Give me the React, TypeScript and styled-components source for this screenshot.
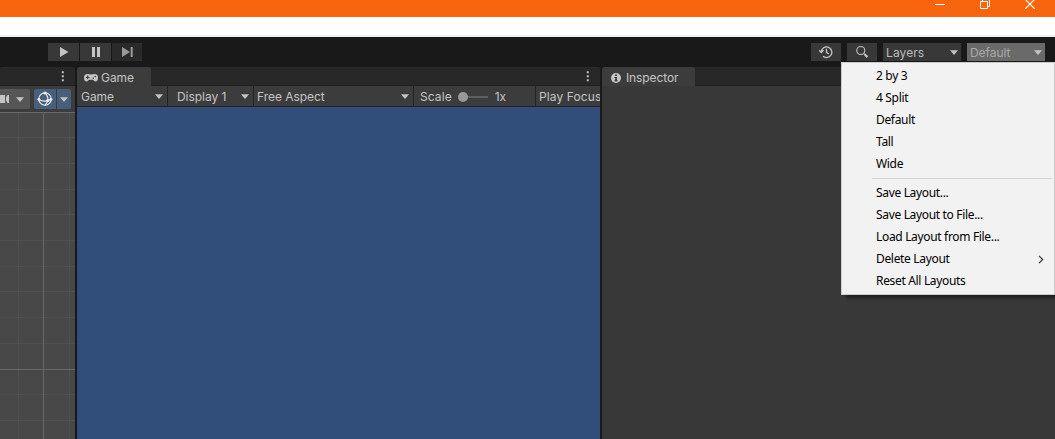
import React from "react";
import styled, { createGlobalStyle } from "styled-components";

const Global = createGlobalStyle`
  * { box-sizing: border-box; }
  body { margin: 0; overflow: hidden; background: #191919; }
  svg { display: block; flex: none; }
`;

const Editor = styled.div`
  position: relative;
  display: flex;
  flex-direction: column;
  width: 1055px;
  height: 439px;
  overflow: hidden;
  background: #191919;
  color: #c4c4c4;
  font: 12px/16px Inter, "Liberation Sans", sans-serif;
  white-space: nowrap;
`;
const TitleBar = styled.div`
  display: flex;
  justify-content: flex-end;
  gap: 35px;
  height: 17px;
  flex: none;
  padding-right: 20px;
  background: #f9650f;
`;
const MenuStrip = styled.div`
  height: 20px;
  flex: none;
  background: #fff;
  border-bottom: 2px solid #eeefef;
`;
const Toolbar = styled.div`
  display: flex;
  justify-content: space-between;
  height: 30px;
  flex: none;
  padding: 6px 10px 0 48px;
`;
const Group = styled.div<{ $gap: number }>`
  display: flex;
  gap: ${(p) => p.$gap}px;
  height: 18px;
`;
const ToolButton = styled.div<{ $width: number; $dim?: boolean }>`
  display: flex;
  align-items: center;
  justify-content: center;
  width: ${(p) => p.$width}px;
  background: ${(p) => (p.$dim ? "#2a2a2a" : "#383838")};
`;
const Dropdown = styled.div<{ $active?: boolean }>`
  display: flex;
  align-items: center;
  justify-content: space-between;
  width: 78px;
  padding: 1px 3px 0;
  background: ${(p) => (p.$active ? "#6a6a6a" : "#383838")};
  color: ${(p) => (p.$active ? "#a9a9a9" : "#bcbcbc")};
`;
const Label = styled.span<{ $track?: number }>`
  letter-spacing: ${(p) => p.$track ?? -0.05}px;
`;
const Docks = styled.div`
  display: flex;
  gap: 2px;
  flex: 1;
  min-height: 0;
`;
const Dock = styled.div<{ $width?: number }>`
  display: flex;
  flex-direction: column;
  overflow: hidden;
  border-radius: 3px 3px 0 0;
  background: #383838;
  ${(p) => (p.$width ? `width: ${p.$width}px; flex: none;` : "flex: 1;")}
`;
const TabRow = styled.div`
  display: flex;
  justify-content: space-between;
  height: 19px;
  flex: none;
  background: #282828;
  box-shadow: inset 0 -1px #202020;
`;
const Tab = styled.div<{ $width: number }>`
  display: flex;
  align-items: center;
  width: ${(p) => p.$width}px;
  padding: 2px 0 0 7px;
  gap: 3px;
  border-radius: 3px 3px 0 0;
  background: #3c3c3c;
`;
const InfoTab = styled(Tab)`
  padding-left: 9px;
  gap: 5px;
`;
const More = styled.div<{ $right: number }>`
  display: flex;
  margin-left: auto;
  padding: 4px ${(p) => p.$right}px 0 0;
`;
const SceneBar = styled.div`
  display: flex;
  align-items: center;
  height: 26px;
  flex: none;
  background: #3c3c3c;
`;
const SceneButton = styled.div<{ $width: number; $on?: boolean; $side?: "left" | "right" }>`
  display: flex;
  align-items: center;
  justify-content: ${(p) => (p.$on ? "center" : "space-between")};
  width: ${(p) => p.$width}px;
  height: 20px;
  background: ${(p) => (p.$on ? "#46607c" : "#565656")};
  border-radius: ${(p) => (p.$side === "left" ? "2px 0 0 2px" : "0 2px 2px 0")};
  margin-left: ${(p) => (p.$on ? (p.$side === "left" ? 4 : 1) : 0)}px;
  padding-right: ${(p) => (p.$on ? 0 : 6)}px;
`;
const GameBar = styled.div`
  display: flex;
  height: 21px;
  flex: none;
  background: #3c3c3c;
  border-bottom: 1px solid #232323;
`;
const GameField = styled.div<{ $width: number; $left: number; $right?: number }>`
  display: flex;
  align-items: center;
  justify-content: space-between;
  width: ${(p) => p.$width}px;
  flex: none;
  padding: 1px ${(p) => p.$right ?? 4}px 0 ${(p) => p.$left}px;
  border-right: 1px solid #232323;
`;
const LastField = styled.div`
  display: flex;
  align-items: center;
  padding: 1px 0 0 3px;
`;
const Viewport = styled.div`
  flex: 1;
  background: #314d79;
`;
const InspectorBody = styled.div`
  flex: 1;
  background: #383838;
`;
const Menu = styled.div`
  position: absolute;
  left: 841px;
  top: 62px;
  width: 214px;
  height: 233px;
  padding: 2px;
  border: 1px solid #ccc;
  background: #f2f2f2;
  box-shadow: 4px 4px 3px -1px rgba(0, 0, 0, 0.45);
  color: #000;
  font: 12px/22px "Noto Sans", "Open Sans", sans-serif;
`;
const MenuItem = styled.div`
  display: flex;
  align-items: center;
  justify-content: space-between;
  height: 22px;
  padding: 0 8px 0 32px;
  letter-spacing: -0.33px;
`;
const Divider = styled.div`
  height: 1px;
  margin: 3px 0 3px 28px;
  background: #d4d4d4;
`;

const Caret = ({ color = "#c4c4c4" }: { color?: string }) => (
  <svg width="8" height="5" viewBox="0 0 8 5"><path d="M0 .2h8L4 5z" fill={color} /></svg>
);
const Dots = () => (
  <svg width="3" height="11" viewBox="0 0 3 11" fill="#c4c4c4">
    <path d="M.8 0.3h2v2h-2zM.8 4.3h2v2h-2zM.8 8.3h2v2h-2z" />
  </svg>
);

const layouts = ["2 by 3", "4 Split", "Default", "Tall", "Wide"];
const actions = ["Save Layout...", "Save Layout to File...", "Load Layout from File...", "Delete Layout", "Reset All Layouts"];

const horizontals = [25, 51, 77, 102, 128, 154, 179, 205, 231, 282, 308];

export default function App() {
  return (
    <Editor>
      <Global />
      <TitleBar>
        <svg width="10" height="17"><path d="M0 4.5h10" stroke="#fff" /></svg>
        <svg width="10" height="17" fill="none" stroke="#fff">
          <path d="M.5 1.5h7v7h-7zM2.5 1V-.5h7v7H8" />
        </svg>
        <svg width="10" height="17" fill="none" stroke="#fff" strokeWidth="1.1">
          <path d="M.3-.7l9.4 9.5M9.7-.7L.3 8.8" />
        </svg>
      </TitleBar>
      <MenuStrip />
      <Toolbar>
        <Group $gap={1}>
          <ToolButton $width={31}>
            <svg width="10" height="10"><path d="M1 0v10l8.5-5z" fill="#c4c4c4" /></svg>
          </ToolButton>
          <ToolButton $width={31}>
            <svg width="8" height="10"><path d="M0 0h3v10H0zM5 0h3v10H5z" fill="#c4c4c4" /></svg>
          </ToolButton>
          <ToolButton $width={30} $dim>
            <svg width="11" height="10"><path d="M0 0v10l8-5zM8.7 0h2v10h-2z" fill="#9b9b9b" /></svg>
          </ToolButton>
        </Group>
        <Group $gap={6}>
          <ToolButton $width={30}>
            <svg width="14" height="14" viewBox="0 0 14 14" fill="none" stroke="#c4c4c4" strokeWidth="1.3">
              <path d="M2.2 7A5.3 5.3 0 1 1 4 11.2M.2 5.3L2.2 7.5 4.5 5.3M7.5 3.8v3.5l2.3 1.7" />
            </svg>
          </ToolButton>
          <ToolButton $width={30}>
            <svg width="14" height="14" viewBox="0 0 14 14" fill="none" stroke="#c4c4c4" strokeWidth="1.1">
              <circle cx="5.8" cy="5.5" r="4" /><path d="M8.7 8.4l1 1" /><path d="M9.6 9.3l2.8 2.8" strokeWidth="2.2" />
            </svg>
          </ToolButton>
          <Dropdown><Label $track={0.1}>Layers</Label><Caret /></Dropdown>
          <Dropdown $active><Label>Default</Label><Caret /></Dropdown>
        </Group>
      </Toolbar>
      <Docks>
        <Dock $width={75}>
          <TabRow><More $right={11}><Dots /></More></TabRow>
          <SceneBar>
            <SceneButton $width={30}>
              <svg width="10" height="8"><path d="M0 0h5v8H0zM6 2.5L7.5 0H9v8H7.5L6 5.5z" fill="#c4c4c4" /></svg>
              <Caret />
            </SceneButton>
            <SceneButton $width={22} $on $side="left">
              <svg width="16" height="16" viewBox="0 0 16 16" fill="none" stroke="#eee" strokeWidth="1.1">
                <circle cx="8" cy="8" r="6.2" />
                <path d="M8 2c2.6 2.3 3.2 5 2.8 7.5M2 8.5c2.5 1.6 6 2 8.8 1 1.4-.3 2.4-.7 3.2-1.3M8 14c1.3-1.2 2.3-2.7 2.8-4.5" />
                <g fill="#eee" stroke="none">
                  <circle cx="8" cy="2" r="1.5" /><circle cx="1.8" cy="8.3" r="1.4" />
                  <circle cx="14" cy="8.3" r="1.4" /><circle cx="10.8" cy="9.5" r="1.6" />
                </g>
              </svg>
            </SceneButton>
            <SceneButton $width={14} $on $side="right"><Caret color="#c4c4c4" /></SceneButton>
          </SceneBar>
          <svg width="75" height="327" fill="none">
            <path d="M0 0h75v327H0z" fill="#484848" />
            <path d={horizontals.map((y) => `M0 ${y + 0.5}h75`).join("") + "M18.5 0v327M69.5 0v327"} stroke="#505050" />
            <path d="M0 .5h75M0 257.5h75M43.5 0v327" stroke="#686868" />
          </svg>
        </Dock>
        <Dock $width={523}>
          <TabRow>
            <Tab $width={74}>
              <svg width="14" height="8" viewBox="0 0 14 8">
                <path d="M3.7 0Q7 .9 10.3 0A3.5 3.5 0 0 1 14 4c0 2-1 3.6-2.4 3.6C10.2 7.6 9.6 5.7 8.6 5.7H5.4c-1 0-1.6 1.9-3 1.9C1 7.6 0 6 0 4A3.5 3.5 0 0 1 3.7 0z" fill="#c4c4c4" />
                <path d="M3.7 1.6v3.6M1.9 3.4h3.6" stroke="#333" />
                <circle cx="9.2" cy="4.2" r=".8" fill="#333" /><circle cx="11.3" cy="2.5" r=".8" fill="#333" />
              </svg>
              <Label>Game</Label>
            </Tab>
            <More $right={11}><Dots /></More>
          </TabRow>
          <GameBar>
            <GameField $width={91} $left={4}><Label>Game</Label><Caret /></GameField>
            <GameField $width={86} $left={9}><Label>Display 1</Label><Caret /></GameField>
            <GameField $width={160} $left={3}><Label>Free Aspect</Label><Caret /></GameField>
            <GameField $width={122} $left={6} $right={29}>
              <Label $track={0.1}>Scale</Label>
              <svg width="30" height="10"><path d="M6 5h24" stroke="#5e5e5e" strokeWidth="2" /><circle cx="5" cy="5" r="5" fill="#999" /></svg>
              <Label>1x</Label>
            </GameField>
            <LastField><Label $track={0.1}>Play Focus</Label></LastField>
          </GameBar>
          <Viewport />
        </Dock>
        <Dock>
          <TabRow>
            <InfoTab $width={93}>
              <svg width="10" height="10" viewBox="0 0 10 10">
                <circle cx="5" cy="5" r="5" fill="#c4c4c4" />
                <path d="M4.1 1.4h1.8V3H4.1zM3.5 4h2.4v3.2h.7v1H3.5v-1h.7V5h-.7z" fill="#333" />
              </svg>
              <Label $track={-0.1}>Inspector</Label>
            </InfoTab>
          </TabRow>
          <InspectorBody />
        </Dock>
      </Docks>
      <Menu>
        {layouts.map((name) => <MenuItem key={name}>{name}</MenuItem>)}
        <Divider />
        {actions.map((name) => (
          <MenuItem key={name}>
            {name}
            {name === "Delete Layout" && (
              <svg width="6" height="9" fill="none" stroke="#333" strokeWidth="1.2"><path d="M1 .8l3.7 3.7L1 8.2" /></svg>
            )}
          </MenuItem>
        ))}
      </Menu>
    </Editor>
  );
}
